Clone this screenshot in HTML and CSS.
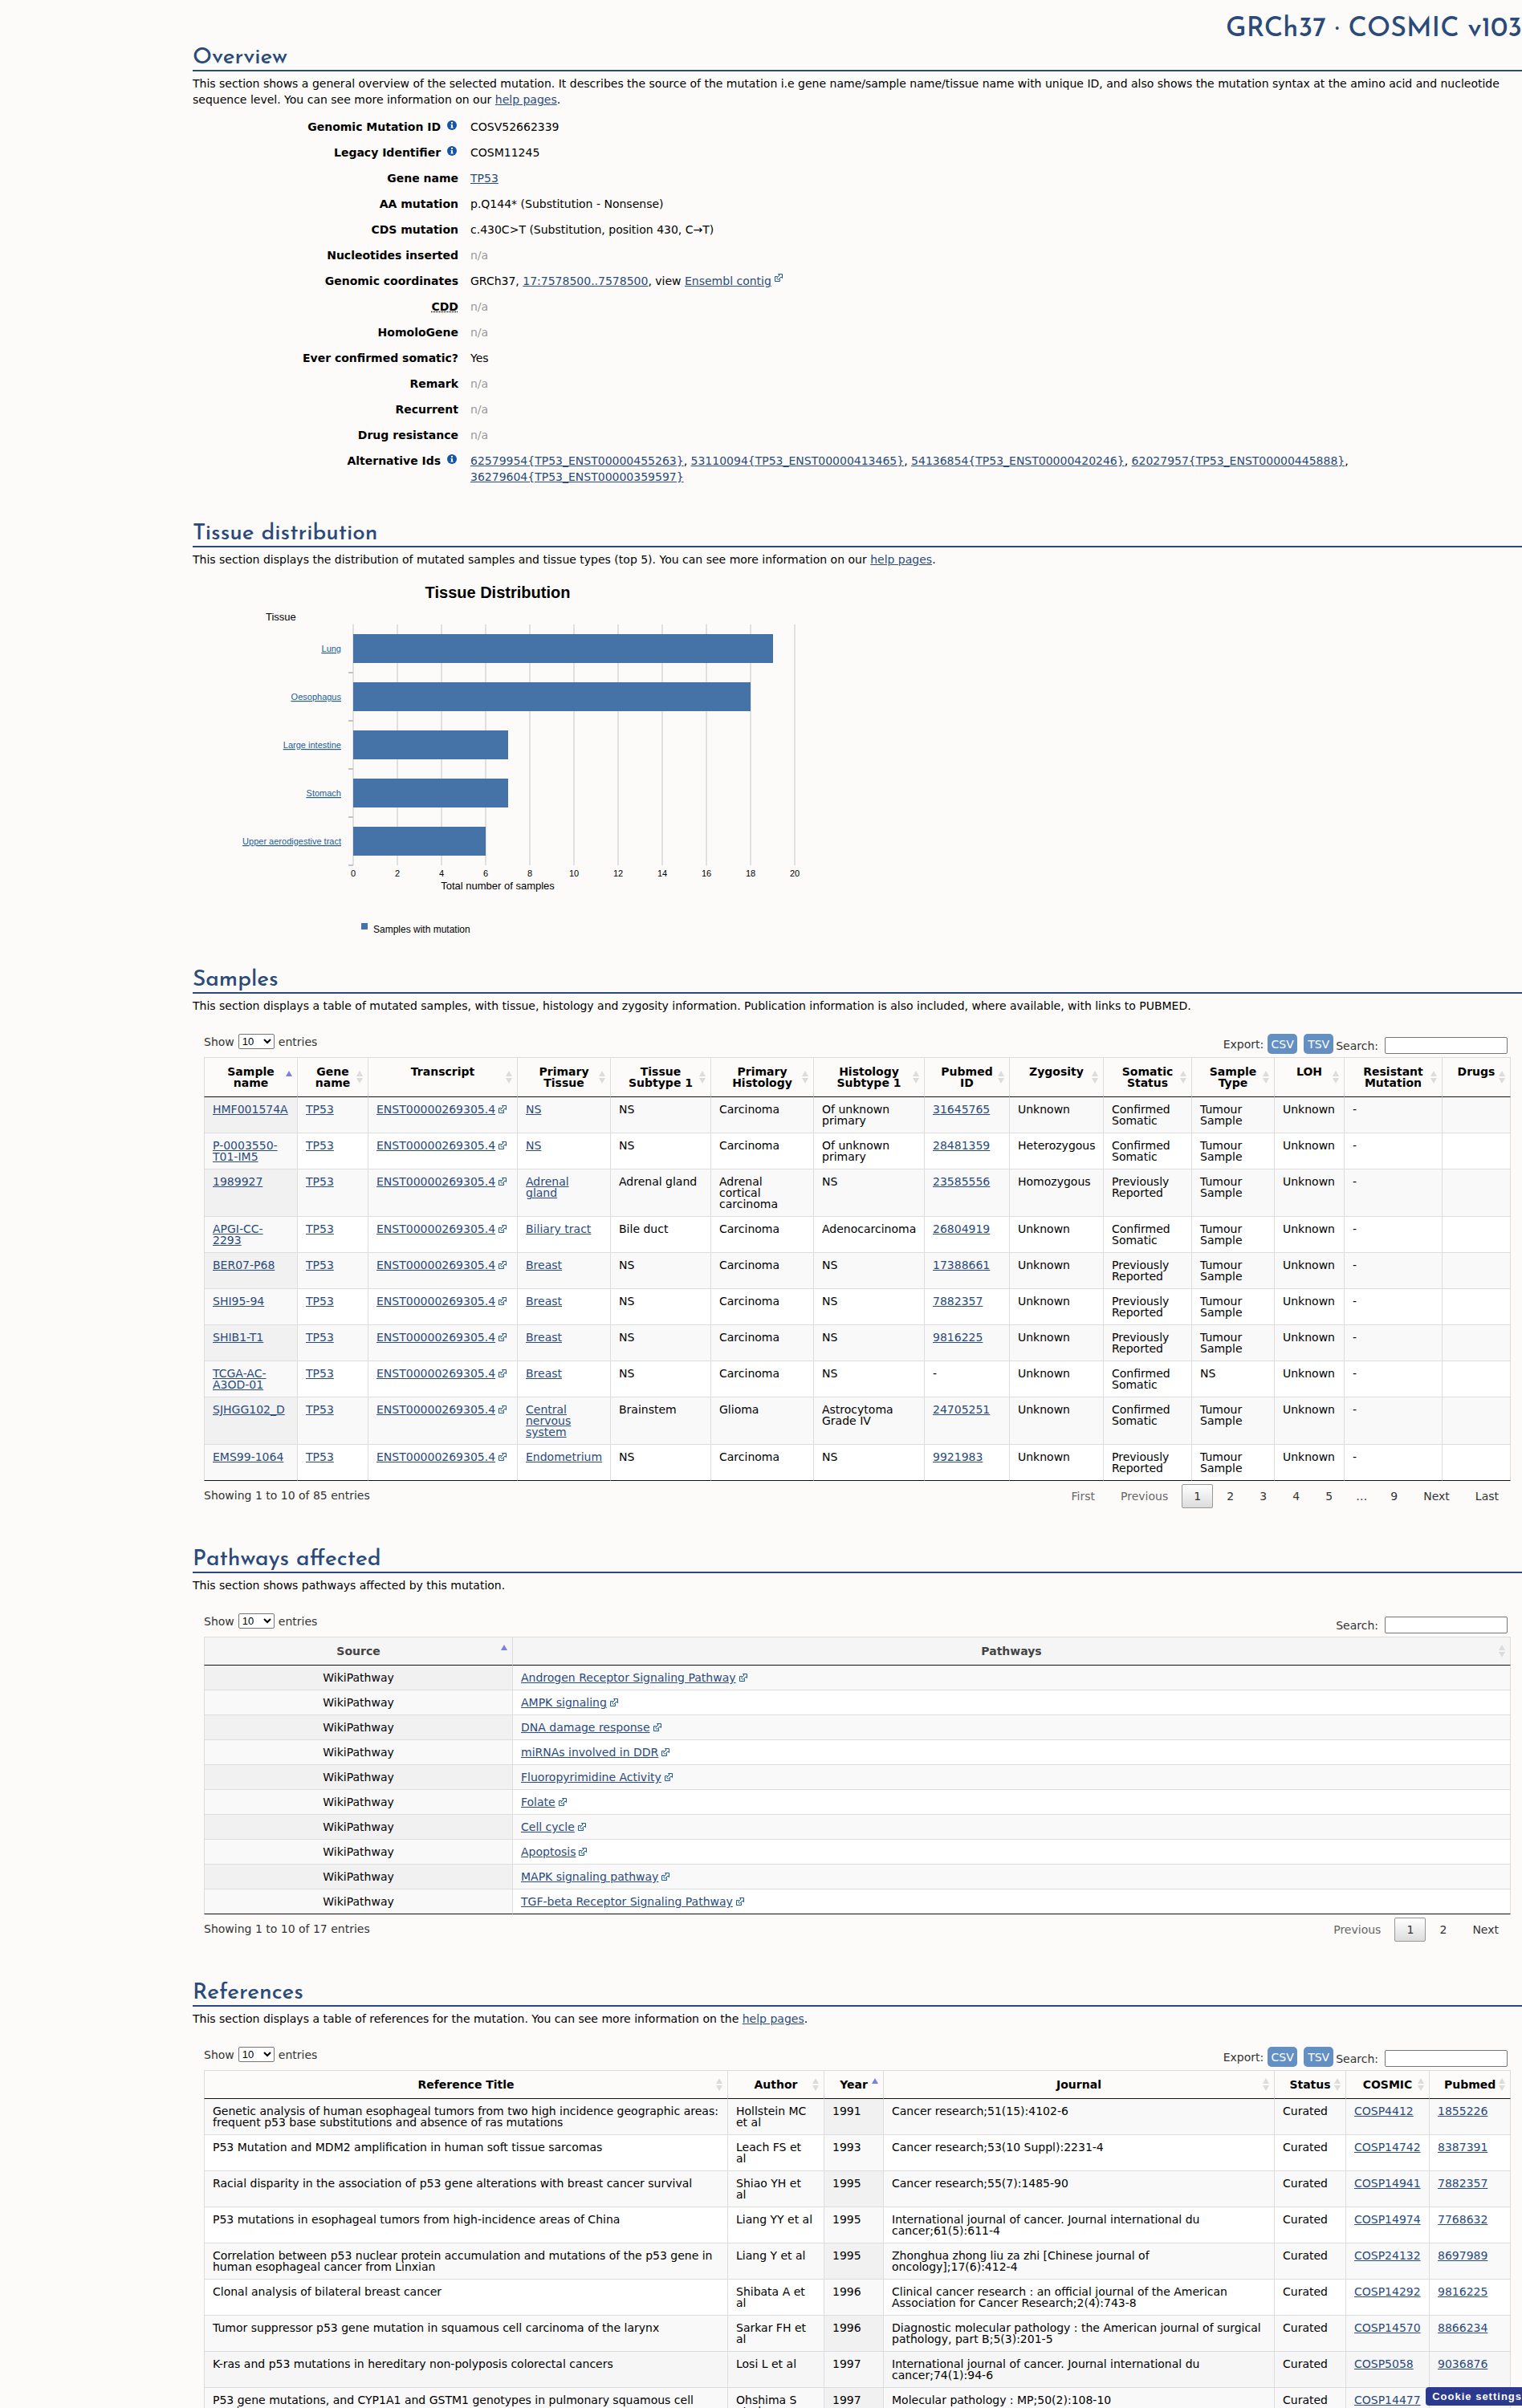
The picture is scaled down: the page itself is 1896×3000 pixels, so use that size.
FILE: index.html
```html
<!DOCTYPE html>
<html lang="en">
<head>
  <meta charset="UTF-8" />
  <title>COSMIC mutation overview - COSV52662339</title>
  <link rel="stylesheet" href="styles.css">
</head>
<body>
  <svg class="sprite" aria-hidden="true">
    <symbol id="ext" viewBox="0 0 10 10">
      <path d="M3.5 3.5H.5v6h6v-3" fill="none" stroke="#1a5aa5" />
      <path d="M4.5.5h5v5L8 4 4.5 7.5l-2-2L6 2z" fill="#fff" stroke="#1a5aa5" />
    </symbol>
    <symbol id="info" viewBox="0 0 12 12">
      <circle cx="6" cy="6" r="6" fill="#1356a6" />
      <path d="M5 2h2v2H5zM4.5 5H7v3.5h.7v1H4.4v-1H5V6h-.5z" fill="#fff" />
    </symbol>
  </svg>

  <main class="page">
    <h1 class="version">GRCh37 · COSMIC v103</h1>

    <section class="section">
      <h2>Overview</h2>
      <p>This section shows a general overview of the selected mutation. It describes the source of the mutation i.e gene name/sample name/tissue name with unique ID, and also shows the mutation syntax at the amino acid and nucleotide sequence level. You can see more information on our <a href="#">help pages</a>.</p>
      <dl class="overview">
        <dt>Genomic Mutation ID <svg class="info"><use href="#info" /></svg></dt><dd>COSV52662339</dd>
        <dt>Legacy Identifier <svg class="info"><use href="#info" /></svg></dt><dd>COSM11245</dd>
        <dt>Gene name</dt><dd><a href="#">TP53</a></dd>
        <dt>AA mutation</dt><dd>p.Q144* (Substitution - Nonsense)</dd>
        <dt>CDS mutation</dt><dd>c.430C&gt;T (Substitution, position 430, C→T)</dd>
        <dt>Nucleotides inserted</dt><dd class="na">n/a</dd>
        <dt>Genomic coordinates</dt><dd>GRCh37, <a href="#">17:7578500..7578500</a>, view <a href="#">Ensembl contig</a><svg class="ext raised"><use href="#ext" /></svg></dd>
        <dt><abbr title="Conserved Domain Database">CDD</abbr></dt><dd class="na">n/a</dd>
        <dt>HomoloGene</dt><dd class="na">n/a</dd>
        <dt>Ever confirmed somatic?</dt><dd>Yes</dd>
        <dt>Remark</dt><dd class="na">n/a</dd>
        <dt>Recurrent</dt><dd class="na">n/a</dd>
        <dt>Drug resistance</dt><dd class="na">n/a</dd>
        <dt>Alternative Ids <svg class="info"><use href="#info" /></svg></dt>
        <dd><a href="#">62579954{TP53_ENST00000455263}</a>, <a href="#">53110094{TP53_ENST00000413465}</a>, <a href="#">54136854{TP53_ENST00000420246}</a>, <a href="#">62027957{TP53_ENST00000445888}</a>, <a href="#">36279604{TP53_ENST00000359597}</a></dd>
      </dl>
    </section>

    <section class="section">
      <h2>Tissue distribution</h2>
      <p>This section displays the distribution of mutated samples and tissue types (top 5). You can see more information on our <a href="#">help pages</a>.</p>
      <svg class="chart" width="800" height="459" viewBox="0 0 800 459">
        <text class="chart-title" x="380" y="38" text-anchor="middle">Tissue Distribution</text>
        <text class="axis-title" x="91" y="66">Tissue</text>
        <!-- grid lines -->
        <path class="grid" d="M200 71v300M255 71v300M310 71v300M365 71v300M420 71v300M475 71v300M530 71v300M585 71v300M640 71v300M695 71v300M750 71v300" />
        <path class="tick" d="M194 131h6M194 191h6M194 251h6M194 311h6M194 371h6" />
        <!-- bars -->
        <g class="bars">
          <rect x="200" y="83" width="523" height="36" />
          <rect x="200" y="143" width="495" height="36" />
          <rect x="200" y="203" width="193" height="36" />
          <rect x="200" y="263" width="193" height="36" />
          <rect x="200" y="323" width="165" height="36" />
        </g>
        <g class="tissues" text-anchor="end">
          <a href="#"><text x="185" y="105">Lung</text></a>
          <a href="#"><text x="185" y="165">Oesophagus</text></a>
          <a href="#"><text x="185" y="225">Large intestine</text></a>
          <a href="#"><text x="185" y="285">Stomach</text></a>
          <a href="#"><text x="185" y="345">Upper aerodigestive tract</text></a>
        </g>
        <g class="scale" text-anchor="middle">
          <text x="200" y="385">0</text>
          <text x="255" y="385">2</text>
          <text x="310" y="385">4</text>
          <text x="365" y="385">6</text>
          <text x="420" y="385">8</text>
          <text x="475" y="385">10</text>
          <text x="530" y="385">12</text>
          <text x="585" y="385">14</text>
          <text x="640" y="385">16</text>
          <text x="695" y="385">18</text>
          <text x="750" y="385">20</text>
        </g>
        <text class="axis-title" x="380" y="401" text-anchor="middle">Total number of samples</text>
        <rect class="key" x="210" y="443" width="8" height="8" />
        <text class="legend" x="225" y="455">Samples with mutation</text>
      </svg>
    </section>

    <section class="section">
      <h2>Samples</h2>
      <p>This section displays a table of mutated samples, with tissue, histology and zygosity information. Publication information is also included, where available, with links to PUBMED.</p>
      <div class="datatable">
        <div class="controls">
          <label class="length">Show <select><option>10</option><option>25</option></select> entries</label>
          <div class="filter">
            <span>Export:</span>
            <button class="export" type="button">CSV</button>
            <button class="export" type="button">TSV</button>
            <label for="samples-search">Search:</label>
            <input type="search" id="samples-search">
          </div>
        </div>
        <table>
          <colgroup>
            <col class="w117"><col class="w88"><col class="w186"><col class="w116"><col class="w125"><col class="w128"><col class="w138">
            <col class="w106"><col class="w117"><col class="w110"><col class="w103"><col class="w87"><col class="w122"><col class="w85">
          </colgroup>
          <thead>
            <tr><th class="sort asc">Sample name</th><th class="sort">Gene name</th><th class="sort">Transcript</th><th class="sort">Primary Tissue</th><th class="sort">Tissue Subtype 1</th><th class="sort">Primary Histology</th><th class="sort">Histology Subtype 1</th><th class="sort">Pubmed ID</th><th class="sort">Zygosity</th><th class="sort">Somatic Status</th><th class="sort">Sample Type</th><th class="sort">LOH</th><th class="sort">Resistant Mutation</th><th class="sort">Drugs</th></tr>
          </thead>
          <tbody>
            <tr><td class="sorted"><a href="#">HMF001574A</a></td><td><a href="#">TP53</a></td><td class="nowrap"><a href="#">ENST00000269305.4</a><svg class="ext"><use href="#ext" /></svg></td><td><a href="#">NS</a></td><td>NS</td><td>Carcinoma</td><td>Of unknown primary</td><td><a href="#">31645765</a></td><td>Unknown</td><td>Confirmed Somatic</td><td>Tumour Sample</td><td>Unknown</td><td>-</td><td></td></tr>
            <tr><td class="sorted"><a href="#">P-0003550-T01-IM5</a></td><td><a href="#">TP53</a></td><td class="nowrap"><a href="#">ENST00000269305.4</a><svg class="ext"><use href="#ext" /></svg></td><td><a href="#">NS</a></td><td>NS</td><td>Carcinoma</td><td>Of unknown primary</td><td><a href="#">28481359</a></td><td>Heterozygous</td><td>Confirmed Somatic</td><td>Tumour Sample</td><td>Unknown</td><td>-</td><td></td></tr>
            <tr><td class="sorted"><a href="#">1989927</a></td><td><a href="#">TP53</a></td><td class="nowrap"><a href="#">ENST00000269305.4</a><svg class="ext"><use href="#ext" /></svg></td><td><a href="#">Adrenal gland</a></td><td>Adrenal gland</td><td>Adrenal cortical carcinoma</td><td>NS</td><td><a href="#">23585556</a></td><td>Homozygous</td><td>Previously Reported</td><td>Tumour Sample</td><td>Unknown</td><td>-</td><td></td></tr>
            <tr><td class="sorted"><a href="#">APGI-CC-2293</a></td><td><a href="#">TP53</a></td><td class="nowrap"><a href="#">ENST00000269305.4</a><svg class="ext"><use href="#ext" /></svg></td><td><a href="#">Biliary tract</a></td><td>Bile duct</td><td>Carcinoma</td><td>Adenocarcinoma</td><td><a href="#">26804919</a></td><td>Unknown</td><td>Confirmed Somatic</td><td>Tumour Sample</td><td>Unknown</td><td>-</td><td></td></tr>
            <tr><td class="sorted"><a href="#">BER07-P68</a></td><td><a href="#">TP53</a></td><td class="nowrap"><a href="#">ENST00000269305.4</a><svg class="ext"><use href="#ext" /></svg></td><td><a href="#">Breast</a></td><td>NS</td><td>Carcinoma</td><td>NS</td><td><a href="#">17388661</a></td><td>Unknown</td><td>Previously Reported</td><td>Tumour Sample</td><td>Unknown</td><td>-</td><td></td></tr>
            <tr><td class="sorted"><a href="#">SHI95-94</a></td><td><a href="#">TP53</a></td><td class="nowrap"><a href="#">ENST00000269305.4</a><svg class="ext"><use href="#ext" /></svg></td><td><a href="#">Breast</a></td><td>NS</td><td>Carcinoma</td><td>NS</td><td><a href="#">7882357</a></td><td>Unknown</td><td>Previously Reported</td><td>Tumour Sample</td><td>Unknown</td><td>-</td><td></td></tr>
            <tr><td class="sorted"><a href="#">SHIB1-T1</a></td><td><a href="#">TP53</a></td><td class="nowrap"><a href="#">ENST00000269305.4</a><svg class="ext"><use href="#ext" /></svg></td><td><a href="#">Breast</a></td><td>NS</td><td>Carcinoma</td><td>NS</td><td><a href="#">9816225</a></td><td>Unknown</td><td>Previously Reported</td><td>Tumour Sample</td><td>Unknown</td><td>-</td><td></td></tr>
            <tr><td class="sorted"><a href="#">TCGA-AC-A3OD-01</a></td><td><a href="#">TP53</a></td><td class="nowrap"><a href="#">ENST00000269305.4</a><svg class="ext"><use href="#ext" /></svg></td><td><a href="#">Breast</a></td><td>NS</td><td>Carcinoma</td><td>NS</td><td>-</td><td>Unknown</td><td>Confirmed Somatic</td><td>NS</td><td>Unknown</td><td>-</td><td></td></tr>
            <tr><td class="sorted"><a href="#">SJHGG102_D</a></td><td><a href="#">TP53</a></td><td class="nowrap"><a href="#">ENST00000269305.4</a><svg class="ext"><use href="#ext" /></svg></td><td><a href="#">Central nervous system</a></td><td>Brainstem</td><td>Glioma</td><td>Astrocytoma Grade IV</td><td><a href="#">24705251</a></td><td>Unknown</td><td>Confirmed Somatic</td><td>Tumour Sample</td><td>Unknown</td><td>-</td><td></td></tr>
            <tr><td class="sorted"><a href="#">EMS99-1064</a></td><td><a href="#">TP53</a></td><td class="nowrap"><a href="#">ENST00000269305.4</a><svg class="ext"><use href="#ext" /></svg></td><td><a href="#">Endometrium</a></td><td>NS</td><td>Carcinoma</td><td>NS</td><td><a href="#">9921983</a></td><td>Unknown</td><td>Previously Reported</td><td>Tumour Sample</td><td>Unknown</td><td>-</td><td></td></tr>
          </tbody>
        </table>
        <div class="table-foot">
          <div class="showing">Showing 1 to 10 of 85 entries</div>
          <div class="pager">
            <button type="button" disabled>First</button>
            <button type="button" disabled>Previous</button>
            <button type="button" class="current">1</button>
            <button type="button">2</button>
            <button type="button">3</button>
            <button type="button">4</button>
            <button type="button">5</button>
            <span class="dots">…</span>
            <button type="button">9</button>
            <button type="button">Next</button>
            <button type="button">Last</button>
          </div>
        </div>
      </div>
    </section>

    <section class="section">
      <h2>Pathways affected</h2>
      <p>This section shows pathways affected by this mutation.</p>
      <div class="datatable">
        <div class="controls">
          <label class="length">Show <select><option>10</option><option>25</option></select> entries</label>
          <div class="filter">
            <label for="pathways-search">Search:</label>
            <input type="search" id="pathways-search">
          </div>
        </div>
        <table class="pathways">
          <colgroup><col class="w385"><col></colgroup>
          <thead>
            <tr><th class="sort asc">Source</th><th class="sort">Pathways</th></tr>
          </thead>
          <tbody>
            <tr><td class="sorted">WikiPathway</td><td><a href="#">Androgen Receptor Signaling Pathway</a><svg class="ext"><use href="#ext" /></svg></td></tr>
            <tr><td class="sorted">WikiPathway</td><td><a href="#">AMPK signaling</a><svg class="ext"><use href="#ext" /></svg></td></tr>
            <tr><td class="sorted">WikiPathway</td><td><a href="#">DNA damage response</a><svg class="ext"><use href="#ext" /></svg></td></tr>
            <tr><td class="sorted">WikiPathway</td><td><a href="#">miRNAs involved in DDR</a><svg class="ext"><use href="#ext" /></svg></td></tr>
            <tr><td class="sorted">WikiPathway</td><td><a href="#">Fluoropyrimidine Activity</a><svg class="ext"><use href="#ext" /></svg></td></tr>
            <tr><td class="sorted">WikiPathway</td><td><a href="#">Folate</a><svg class="ext"><use href="#ext" /></svg></td></tr>
            <tr><td class="sorted">WikiPathway</td><td><a href="#">Cell cycle</a><svg class="ext"><use href="#ext" /></svg></td></tr>
            <tr><td class="sorted">WikiPathway</td><td><a href="#">Apoptosis</a><svg class="ext"><use href="#ext" /></svg></td></tr>
            <tr><td class="sorted">WikiPathway</td><td><a href="#">MAPK signaling pathway</a><svg class="ext"><use href="#ext" /></svg></td></tr>
            <tr><td class="sorted">WikiPathway</td><td><a href="#">TGF-beta Receptor Signaling Pathway</a><svg class="ext"><use href="#ext" /></svg></td></tr>
          </tbody>
        </table>
        <div class="table-foot">
          <div class="showing">Showing 1 to 10 of 17 entries</div>
          <div class="pager">
            <button type="button" disabled>Previous</button>
            <button type="button" class="current">1</button>
            <button type="button">2</button>
            <button type="button">Next</button>
          </div>
        </div>
      </div>
    </section>

    <section class="section">
      <h2>References</h2>
      <p>This section displays a table of references for the mutation. You can see more information on the <a href="#">help pages</a>.</p>
      <div class="datatable">
        <div class="controls">
          <label class="length">Show <select><option>10</option><option>25</option></select> entries</label>
          <div class="filter">
            <span>Export:</span>
            <button class="export" type="button">CSV</button>
            <button class="export" type="button">TSV</button>
            <label for="refs-search">Search:</label>
            <input type="search" id="refs-search">
          </div>
        </div>
        <table>
          <colgroup><col class="w653"><col class="w120"><col class="w74"><col class="w487"><col class="w89"><col class="w104"><col class="w101"></colgroup>
          <thead>
            <tr><th class="sort">Reference Title</th><th class="sort">Author</th><th class="sort asc">Year</th><th class="sort">Journal</th><th class="sort">Status</th><th class="sort">COSMIC</th><th class="sort">Pubmed</th></tr>
          </thead>
          <tbody>
            <tr><td>Genetic analysis of human esophageal tumors from two high incidence geographic areas: frequent p53 base substitutions and absence of ras mutations</td><td class="author">Hollstein MC et al</td><td class="sorted">1991</td><td>Cancer research;51(15):4102-6</td><td>Curated</td><td><a href="#">COSP4412</a></td><td><a href="#">1855226</a></td></tr>
            <tr><td>P53 Mutation and MDM2 amplification in human soft tissue sarcomas</td><td class="author">Leach FS et al</td><td class="sorted">1993</td><td>Cancer research;53(10 Suppl):2231-4</td><td>Curated</td><td><a href="#">COSP14742</a></td><td><a href="#">8387391</a></td></tr>
            <tr><td>Racial disparity in the association of p53 gene alterations with breast cancer survival</td><td class="author">Shiao YH et al</td><td class="sorted">1995</td><td>Cancer research;55(7):1485-90</td><td>Curated</td><td><a href="#">COSP14941</a></td><td><a href="#">7882357</a></td></tr>
            <tr><td>P53 mutations in esophageal tumors from high-incidence areas of China</td><td class="nowrap">Liang YY et al</td><td class="sorted">1995</td><td>International journal of cancer. Journal international du cancer;61(5):611-4</td><td>Curated</td><td><a href="#">COSP14974</a></td><td><a href="#">7768632</a></td></tr>
            <tr><td>Correlation between p53 nuclear protein accumulation and mutations of the p53 gene in human esophageal cancer from Linxian</td><td class="author">Liang Y et al</td><td class="sorted">1995</td><td>Zhonghua zhong liu za zhi [Chinese journal of oncology];17(6):412-4</td><td>Curated</td><td><a href="#">COSP24132</a></td><td><a href="#">8697989</a></td></tr>
            <tr><td>Clonal analysis of bilateral breast cancer</td><td class="author">Shibata A et al</td><td class="sorted">1996</td><td>Clinical cancer research : an official journal of the American Association for Cancer Research;2(4):743-8</td><td>Curated</td><td><a href="#">COSP14292</a></td><td><a href="#">9816225</a></td></tr>
            <tr><td>Tumor suppressor p53 gene mutation in squamous cell carcinoma of the larynx</td><td class="author">Sarkar FH et al</td><td class="sorted">1996</td><td>Diagnostic molecular pathology : the American journal of surgical pathology, part B;5(3):201-5</td><td>Curated</td><td><a href="#">COSP14570</a></td><td><a href="#">8866234</a></td></tr>
            <tr class="active"><td>K-ras and p53 mutations in hereditary non-polyposis colorectal cancers</td><td class="author">Losi L et al</td><td class="sorted">1997</td><td>International journal of cancer. Journal international du cancer;74(1):94-6</td><td>Curated</td><td><a href="#">COSP5058</a></td><td><a href="#">9036876</a></td></tr>
            <tr><td>P53 gene mutations, and CYP1A1 and GSTM1 genotypes in pulmonary squamous cell carcinomas</td><td class="author">Ohshima S et&nbsp;al</td><td class="sorted">1997</td><td>Molecular pathology : MP;50(2):108-10</td><td>Curated</td><td><a href="#">COSP14477</a></td><td><a href="#">9231159</a></td></tr>
          </tbody>
        </table>
      </div>
    </section>
  </main>

  <button class="cookie" type="button">Cookie settings</button>
</body>
</html>
```
FILE: styles.css
```css
* {
  box-sizing: border-box;
}
body {
  margin: 0;
  height: 100vh;
  overflow: hidden;
  background-color: #fcfbf9;
  color: #000;
  font-family: Verdana, "DejaVu Sans", sans-serif;
  font-size: 14px;
  line-height: 20px;
}
a {
  color: #2a4b7c;
  text-decoration: underline;
}
button, input {
  font-family: inherit;
  font-size: 14px;
}
.sprite {
  display: none;
}
.page {
  margin-left: 240px;
  padding-top: 18px;
}
.version {
  margin: 0;
  font-family: "Josefin Sans", Lato, sans-serif;
  font-size: 34px;
  font-weight: 500;
  line-height: 38px;
  text-align: right;
  color: #2a4a7a;
}
.section {
  margin-bottom: 39px;
}
.section h2 {
  margin: 0 0 5px;
  padding: 2px 0 1px;
  border-bottom: 2px solid #2a4a7a;
  font-family: "Josefin Sans", Lato, sans-serif;
  font-size: 28px;
  font-weight: 500;
  line-height: 28px;
  color: #2a4a7a;
}
.section p {
  margin: 0;
}

/* overview list */
.overview {
  display: grid;
  grid-template-columns: 331px 1fr;
  column-gap: 15px;
  margin: 8px 0 0;
}
.overview dt, .overview dd {
  margin: 0;
  padding: 6px 0;
}
.overview dt {
  font-weight: bold;
  text-align: right;
}
.overview .na {
  color: #999;
}
.overview abbr {
  text-decoration: underline dotted;
}
.info {
  width: 12px;
  height: 12px;
  margin: 0 2px 0 3px;
  vertical-align: 1px;
}
.ext {
  width: 10px;
  height: 10px;
  margin-left: 4px;
}
.ext.raised {
  vertical-align: 4px;
}

/* bar chart */
.chart {
  display: block;
  font-family: Arial, "Liberation Sans", sans-serif;
}
.chart-title {
  font-size: 20px;
  font-weight: bold;
}
.axis-title {
  font-size: 13px;
}
.grid {
  stroke: #e0e0e0;
  stroke-width: 2;
}
.tick {
  stroke: #c4c4c4;
  stroke-width: 2;
}
.bars rect {
  fill: #4572a7;
}
.key {
  fill: #4572a7;
}
.tissues, .scale {
  font-size: 11px;
}
.tissues text {
  fill: #235d97;
  text-decoration: underline;
}
.legend {
  font-size: 12px;
}

/* data tables */
.datatable {
  margin: 25px 14px 48px;
}
.controls {
  display: flex;
  justify-content: space-between;
  min-height: 25px;
  margin-bottom: 4px;
  color: #333;
}
.length {
  display: flex;
  align-items: center;
  gap: 5px;
  height: 19px;
}
.length select {
  width: 45px;
  height: 19px;
  background-color: #fff;
  border: 1px solid #767676;
  border-radius: 2px;
  font-family: Arial, "Liberation Sans", sans-serif;
  font-size: 13px;
}
.filter {
  display: flex;
  align-items: flex-end;
  padding-right: 4px;
}
.filter input {
  width: 153px;
  height: 21px;
  margin-left: 8px;
  border: 1px solid #767676;
  border-radius: 2px;
  background-color: #fff;
}
.filter span {
  margin-right: 5px;
  line-height: 24px;
}
.export {
  width: 37px;
  height: 25px;
  margin-right: 8px;
  padding: 0;
  border: 0;
  border-radius: 5px;
  background-color: #638fc2;
  color: #fff;
}
.export + label {
  margin-left: -5px;
}
table {
  width: 100%;
  table-layout: fixed;
  border-collapse: separate;
  border-spacing: 0;
  line-height: 14px;
}
th, td {
  border-right: 1px solid #ddd;
  vertical-align: top;
}
th:first-child, td:first-child {
  border-left: 1px solid #ddd;
}
th {
  position: relative;
  padding: 10px 18px;
  border-top: 1px solid #ddd;
  border-bottom: 1px solid #111;
  font-weight: bold;
}
td {
  padding: 8px 10px;
  border-bottom: 1px solid #ddd;
  background-color: #fff;
}
td.author {
  padding-right: 14px;
}
tbody tr:nth-child(odd) td {
  background-color: #f9f9f9;
}
tbody tr td.sorted {
  background-color: #f9f9f9;
}
tbody tr:nth-child(odd) td.sorted {
  background-color: #f1f1f1;
}
tbody tr.active td {
  background-color: #f6f6f6;
}
tbody tr:last-child td {
  border-bottom-color: #111;
}
.sort::before, .sort::after {
  content: "";
  position: absolute;
  right: 6px;
  border: 4px solid transparent;
}
.sort::before {
  top: calc(50% - 8px);
  border-top: 0;
  border-bottom: 7px solid #dcdcdc;
}
.sort::after {
  top: calc(50% + 1px);
  border-bottom: 0;
  border-top: 7px solid #dcdcdc;
}
.sort.asc::before {
  border-bottom-color: #7b80dc;
}
.sort.asc::after {
  display: none;
}
.nowrap {
  white-space: nowrap;
}
.pathways th {
  background-color: #f5f5f5;
  color: #444;
}
.pathways td.sorted {
  text-align: center;
}
.w74 { width: 74px; }
.w85 { width: 85px; }
.w87 { width: 87px; }
.w88 { width: 88px; }
.w89 { width: 89px; }
.w101 { width: 101px; }
.w103 { width: 103px; }
.w104 { width: 104px; }
.w106 { width: 106px; }
.w110 { width: 110px; }
.w116 { width: 116px; }
.w117 { width: 117px; }
.w120 { width: 120px; }
.w122 { width: 122px; }
.w125 { width: 125px; }
.w128 { width: 128px; }
.w138 { width: 138px; }
.w186 { width: 186px; }
.w385 { width: 385px; }
.w487 { width: 487px; }
.w653 { width: 653px; }
.table-foot {
  display: flex;
  justify-content: space-between;
  padding-top: 4px;
  color: #333;
}
.showing {
  padding-top: 4px;
}
.pager {
  display: flex;
  gap: 2px;
}
.pager button {
  min-width: 39px;
  height: 30px;
  padding: 0 14px;
  border: 1px solid transparent;
  border-radius: 2px;
  background: none;
  color: #333;
}
.pager button:disabled {
  color: #666;
}
.pager .current {
  border-color: #979797;
  background: linear-gradient(to bottom, #fff 0%, #dcdcdc 100%);
}
.dots {
  padding: 5px 12px;
}
.cookie {
  position: fixed;
  right: 0;
  bottom: 3px;
  height: 23px;
  padding: 0 0 0 8px;
  border: 0;
  border-radius: 4px 0 0 4px;
  background-color: #2b3a8c;
  color: #fff;
  font-family: Arial, "Liberation Sans", sans-serif;
  font-size: 13px;
  font-weight: bold;
  letter-spacing: 1px;
  white-space: nowrap;
}
```
